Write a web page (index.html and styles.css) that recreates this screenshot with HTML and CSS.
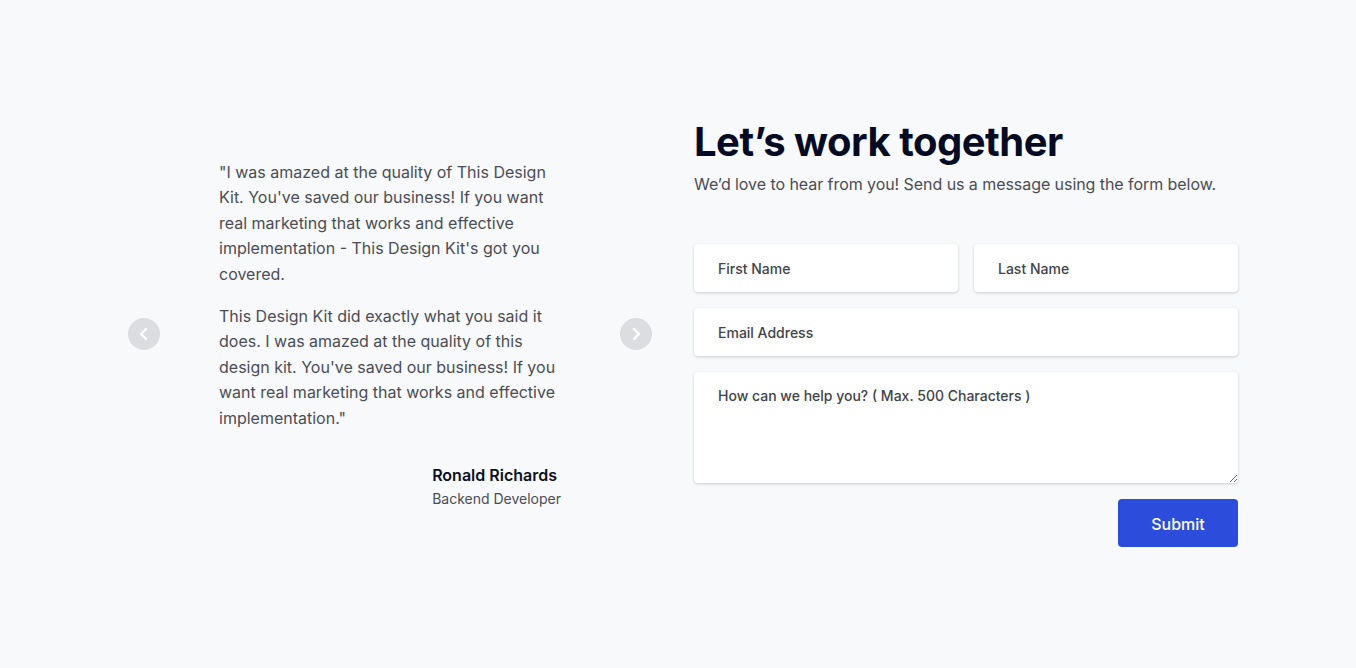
FILE: index.html
```html
<!DOCTYPE html>
<html lang="en">
<head>
<meta charset="utf-8">
<title>Let's work together</title>
<link rel="stylesheet" href="styles.css">
</head>
<body>
<main class="page">
  <section class="testimonial">
    <button class="nav-btn" aria-label="Previous">
      <svg viewBox="0 0 32 32" width="32" height="32"><path d="M18 11 L13 16 L18 21" fill="none" stroke="#fff" stroke-width="2.4" stroke-linecap="round" stroke-linejoin="round"/></svg>
    </button>
    <div class="quote">
      <p>"I was amazed at the quality of This Design Kit. You've saved our business! If you want real marketing that works and effective implementation - This Design Kit's got you covered.</p>
      <p>This Design Kit did exactly what you said it does. I was amazed at the quality of this design kit. You've saved our business! If you want real marketing that works and effective implementation."</p>
      <div class="author">
        <div class="author-name">Ronald Richards</div>
        <div class="author-role">Backend Developer</div>
      </div>
    </div>
    <button class="nav-btn" aria-label="Next">
      <svg viewBox="0 0 32 32" width="32" height="32"><path d="M14 11 L19 16 L14 21" fill="none" stroke="#fff" stroke-width="2.4" stroke-linecap="round" stroke-linejoin="round"/></svg>
    </button>
  </section>
  <section class="contact">
    <h1 class="title">Let’s work together</h1>
    <p class="subtitle">We’d love to hear from you! Send us a message using the form below.</p>
    <form class="form">
      <div class="row">
        <input class="field" type="text" placeholder="First Name">
        <input class="field" type="text" placeholder="Last Name">
      </div>
      <input class="field" type="email" placeholder="Email Address">
      <textarea class="field area" placeholder="How can we help you? ( Max. 500 Characters )"></textarea>
      <div class="actions">
        <button class="submit" type="button">Submit</button>
      </div>
    </form>
  </section>
</main>
</body>
</html>
```

FILE: styles.css
```css
* { box-sizing: border-box; }
html, body { margin: 0; padding: 0; }
body {
  background: #f8f9fb;
  font-family: Inter, "Noto Sans", sans-serif;
  color: #4a4d55;
}
.page {
  min-height: 668px;
  display: flex;
  align-items: center;
  padding-left: 128px;
  gap: 42px;
}
.testimonial {
  display: flex;
  align-items: center;
  gap: 59px;
}
.nav-btn {
  width: 32px;
  height: 32px;
  border-radius: 50%;
  border: none;
  padding: 0;
  background: #dcdde0;
  display: flex;
  align-items: center;
  justify-content: center;
  flex: none;
}
.quote {
  width: 342px;
  padding-top: 3px;
  display: flex;
  flex-direction: column;
}
.quote p {
  margin: 0 0 16px;
  font-size: 16px;
  line-height: 25.6px;
  color: #4a4d55;
}
.author {
  align-self: flex-end;
  margin-top: 16px;
}
.author-name {
  font-size: 16px;
  font-weight: 600;
  color: #0c1024;
  line-height: 24px;
}
.author-role {
  font-size: 14px;
  color: #4a4d55;
  line-height: 24px;
}
.contact {
  width: 544px;
  display: flex;
  flex-direction: column;
}
.title {
  margin: 0;
  font-size: 40px;
  font-weight: 700;
  line-height: 42px;
  color: #060b24;
  letter-spacing: -0.5px;
}
.subtitle {
  margin: 9px 0 0;
  font-size: 16px;
  line-height: 24px;
  color: #4a4d55;
  letter-spacing: -0.06px;
}
.form {
  margin-top: 48px;
  display: flex;
  flex-direction: column;
  gap: 16px;
}
.row {
  display: flex;
  gap: 16px;
}
.row .field { flex: 1; min-width: 0; }
.field {
  height: 48px;
  border: none;
  border-radius: 4px;
  background: #fff;
  box-shadow: 0 1px 3px rgba(0, 0, 0, 0.18);
  padding: 0 24px;
  font-family: Inter, "Noto Sans", sans-serif;
  font-size: 14px;
  font-weight: 500;
  color: #3f4148;
  outline: none;
}
.field::placeholder { color: #414349; opacity: 1; }
.area {
  height: 111px;
  padding: 13px 24px;
  line-height: 22px;
  resize: vertical;
}
.actions {
  display: flex;
  justify-content: flex-end;
}
.submit {
  width: 120px;
  height: 48px;
  border: none;
  border-radius: 4px;
  background: #2c4ddb;
  color: #fff;
  font-family: Inter, "Noto Sans", sans-serif;
  font-size: 16px;
  font-weight: 500;
  padding: 2px 0 0;
}
```
